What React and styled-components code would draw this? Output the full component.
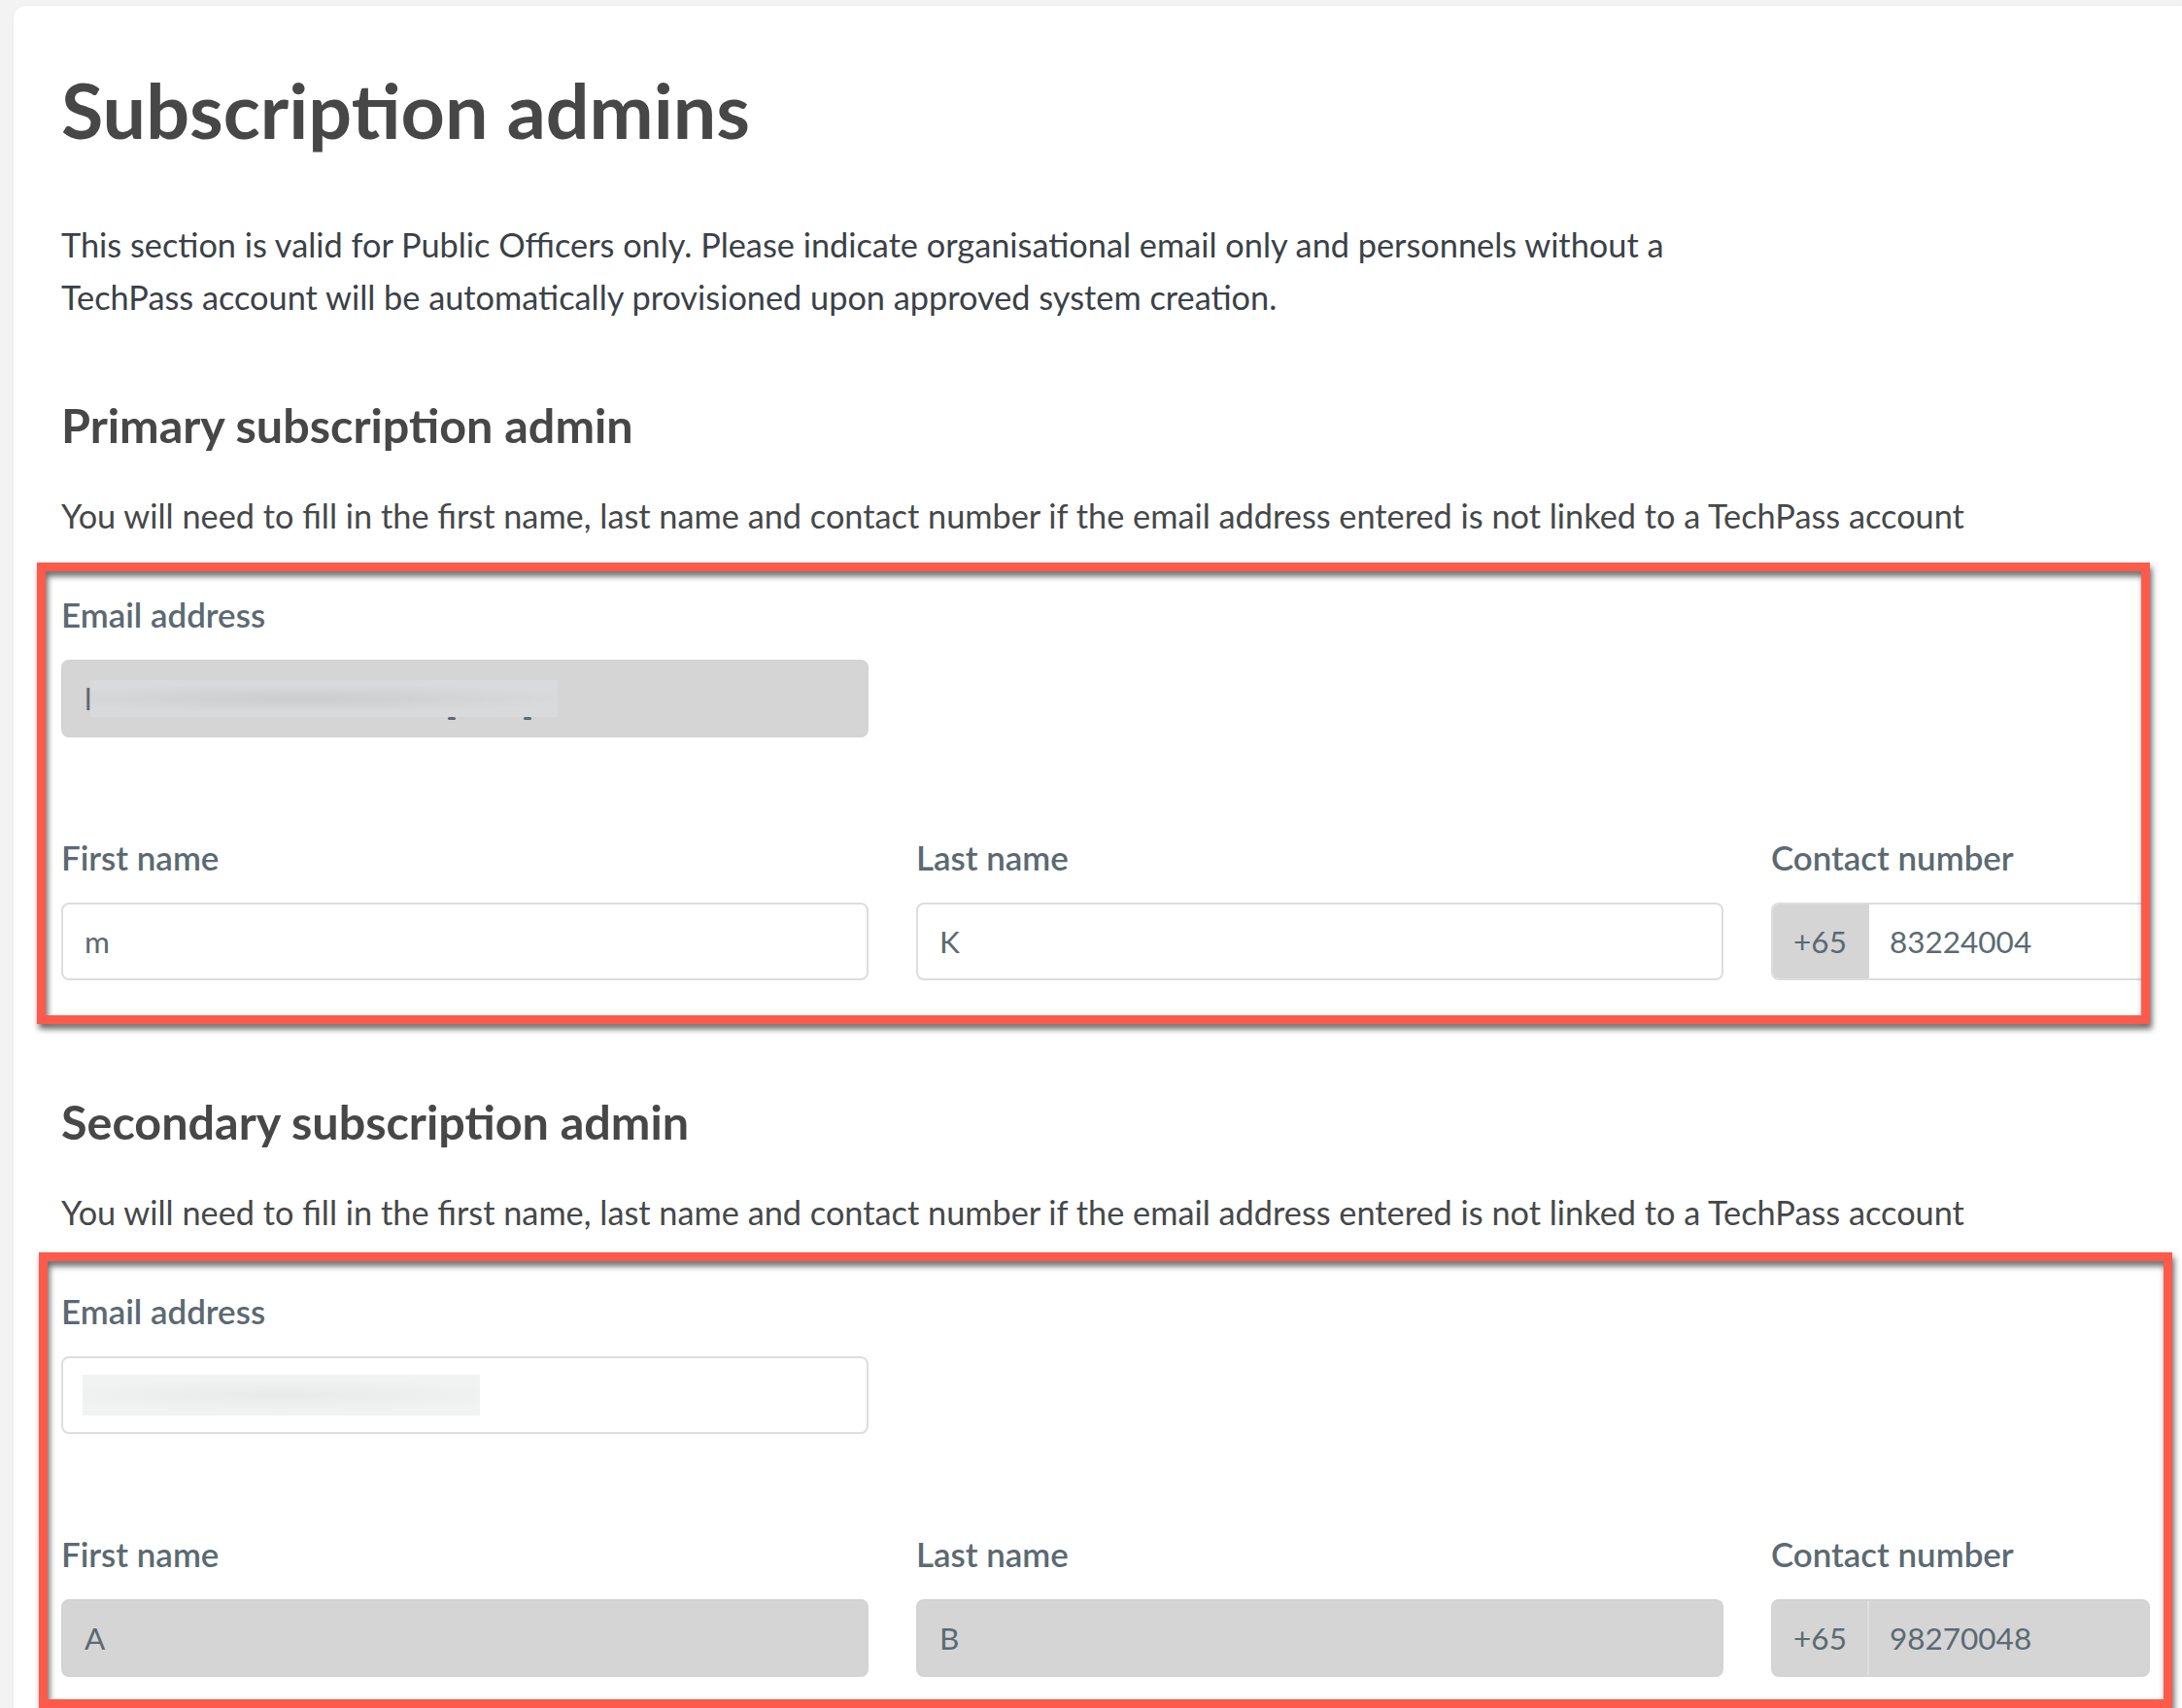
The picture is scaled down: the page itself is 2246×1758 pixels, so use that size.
import React from 'react';
import styled, { createGlobalStyle } from 'styled-components';

const GlobalStyle = createGlobalStyle`
  html, body {
    margin: 0;
    padding: 0;
    background: #f3f3f3;
    overflow: hidden;
  }
  body {
    font-family: Lato, "Open Sans", sans-serif;
  }
`;

const admins = [
  {
    heading: 'Primary subscription admin',
    email: { disabled: true, tone: 'light' },
    first: { value: 'm', disabled: false },
    last: { value: 'K', disabled: false },
    contact: { value: '83224004', disabled: false },
    mark: { top: -34, left: -25, right: 0, bottom: -45 },
  },
  {
    heading: 'Secondary subscription admin',
    email: { disabled: false, tone: 'pale' },
    first: { value: 'A', disabled: true },
    last: { value: 'B', disabled: true },
    contact: { value: '98270048', disabled: true },
    mark: { top: -41, left: -23, right: -23, bottom: -32 },
  },
];

const AdminSection = ({ admin }) => (
  <section>
    <SectionHeading>{admin.heading}</SectionHeading>
    <Hint>
      You will need to fill in the first name, last name and contact number if the email address
      entered is not linked to a TechPass account
    </Hint>
    <FormGrid $mark={admin.mark}>
      <Field>
        <Label>Email address</Label>
        <InputBox $disabled={admin.email.disabled}>
          {admin.email.tone === 'light' && <Caret>l</Caret>}
          <Redacted $tone={admin.email.tone}>
            {admin.email.tone === 'light' && (
              <>
                <Tail $at={368} />
                <Tail $at={446} />
              </>
            )}
          </Redacted>
        </InputBox>
      </Field>
      <RowBreak />
      <Field>
        <Label>First name</Label>
        <InputBox $disabled={admin.first.disabled}>{admin.first.value}</InputBox>
      </Field>
      <Field>
        <Label>Last name</Label>
        <InputBox $disabled={admin.last.disabled}>{admin.last.value}</InputBox>
      </Field>
      <Field>
        <Label>Contact number</Label>
        <PhoneBox $disabled={admin.contact.disabled}>
          <Prefix $disabled={admin.contact.disabled}>+65</Prefix>
          <PhoneNumber>{admin.contact.value}</PhoneNumber>
        </PhoneBox>
      </Field>
    </FormGrid>
  </section>
);

export default function App() {
  return (
    <Page>
      <GlobalStyle />
      <Card>
        <Title>Subscription admins</Title>
        <Intro>
          This section is valid for Public Officers only. Please indicate organisational email only
          and personnels without a TechPass account will be automatically provisioned upon approved
          system creation.
        </Intro>
        <Sections>
          {admins.map((admin) => (
            <AdminSection key={admin.heading} admin={admin} />
          ))}
        </Sections>
      </Card>
    </Page>
  );
}

const Page = styled.div`
  padding: 6px 0 0 14px;
  min-height: 1758px;
  box-sizing: border-box;
`;

const Card = styled.main`
  background: #ffffff;
  border-radius: 12px 0 0 0;
  box-shadow: 0 0 3px rgba(0, 0, 0, 0.06);
  padding: 60px 0 120px 49px;
`;

const Title = styled.h1`
  margin: 0;
  font-size: 79px;
  font-weight: 700;
  line-height: 1.2;
  color: #474747;
`;

const Intro = styled.p`
  margin: 64px 0 0;
  max-width: 1720px;
  font-size: 34.3px;
  line-height: 54px;
  color: #3a4147;
`;

const Sections = styled.div`
  display: flex;
  flex-direction: column;
  gap: 116px;
  margin-top: 75px;
`;

const SectionHeading = styled.h2`
  margin: 0;
  font-size: 48.5px;
  font-weight: 700;
  line-height: 1.2;
  color: #474747;
`;

const Hint = styled.p`
  margin: 38px 0 0;
  font-size: 34.3px;
  line-height: 54px;
  color: #454849;
`;

const FormGrid = styled.div`
  position: relative;
  width: max-content;
  margin-top: 55px;
  display: grid;
  grid-template-columns: 831px 831px 390px;
  column-gap: 49px;
  row-gap: 104px;

  &::after {
    content: '';
    position: absolute;
    top: ${(p) => p.$mark.top}px;
    left: ${(p) => p.$mark.left}px;
    right: ${(p) => p.$mark.right}px;
    bottom: ${(p) => p.$mark.bottom}px;
    border: 9px solid #fd5a4b;
    filter: drop-shadow(2px 5px 3px rgba(0, 0, 0, 0.6));
    pointer-events: none;
  }
`;

const RowBreak = styled.div`
  grid-column: 2 / 4;
`;

const Field = styled.div`
  display: flex;
  flex-direction: column;
  gap: 26px;
`;

const Label = styled.label`
  font-size: 34.9px;
  font-weight: 600;
  line-height: 40px;
  color: #5b6a72;
`;

const InputBox = styled.div`
  box-sizing: border-box;
  height: 80px;
  display: flex;
  align-items: center;
  padding: 0 22px;
  border: 2px solid ${(p) => (p.$disabled ? '#d3d3d3' : '#dddddd')};
  border-radius: 8px;
  background: ${(p) => (p.$disabled ? '#d5d5d5' : '#ffffff')};
  font-size: 31.5px;
  color: #5b6a72;
  overflow: hidden;
`;

const Caret = styled.span`
  font-size: 31.5px;
  color: #5b6a72;
`;

const Redacted = styled.span`
  position: relative;
  display: block;
  width: ${(p) => (p.$tone === 'light' ? '481px' : '409px')};
  height: ${(p) => (p.$tone === 'light' ? '38px' : '42px')};
  margin-left: ${(p) => (p.$tone === 'light' ? '-1px' : '-2px')};
  background: ${(p) =>
    p.$tone === 'light'
      ? 'radial-gradient(ellipse 60% 40% at 45% 50%, #cbcdcf 0%, #d9dadb 100%)'
      : 'radial-gradient(ellipse 60% 40% at 50% 50%, #e8e9e9 0%, #f1f2f2 100%)'};
`;

const Tail = styled.span`
  position: absolute;
  left: ${(p) => p.$at}px;
  bottom: -3px;
  width: 8px;
  height: 3px;
  border-radius: 2px;
  background: #5b6a72;
`;

const PhoneBox = styled(InputBox)`
  padding: 0;
  align-items: stretch;
`;

const Prefix = styled.span`
  flex: 0 0 97px;
  display: flex;
  align-items: center;
  justify-content: center;
  background: #d5d5d5;
  border-right: 2px solid ${(p) => (p.$disabled ? '#e0e0e0' : '#d5d5d5')};
`;

const PhoneNumber = styled.span`
  display: flex;
  align-items: center;
  padding-left: 21px;
`;
